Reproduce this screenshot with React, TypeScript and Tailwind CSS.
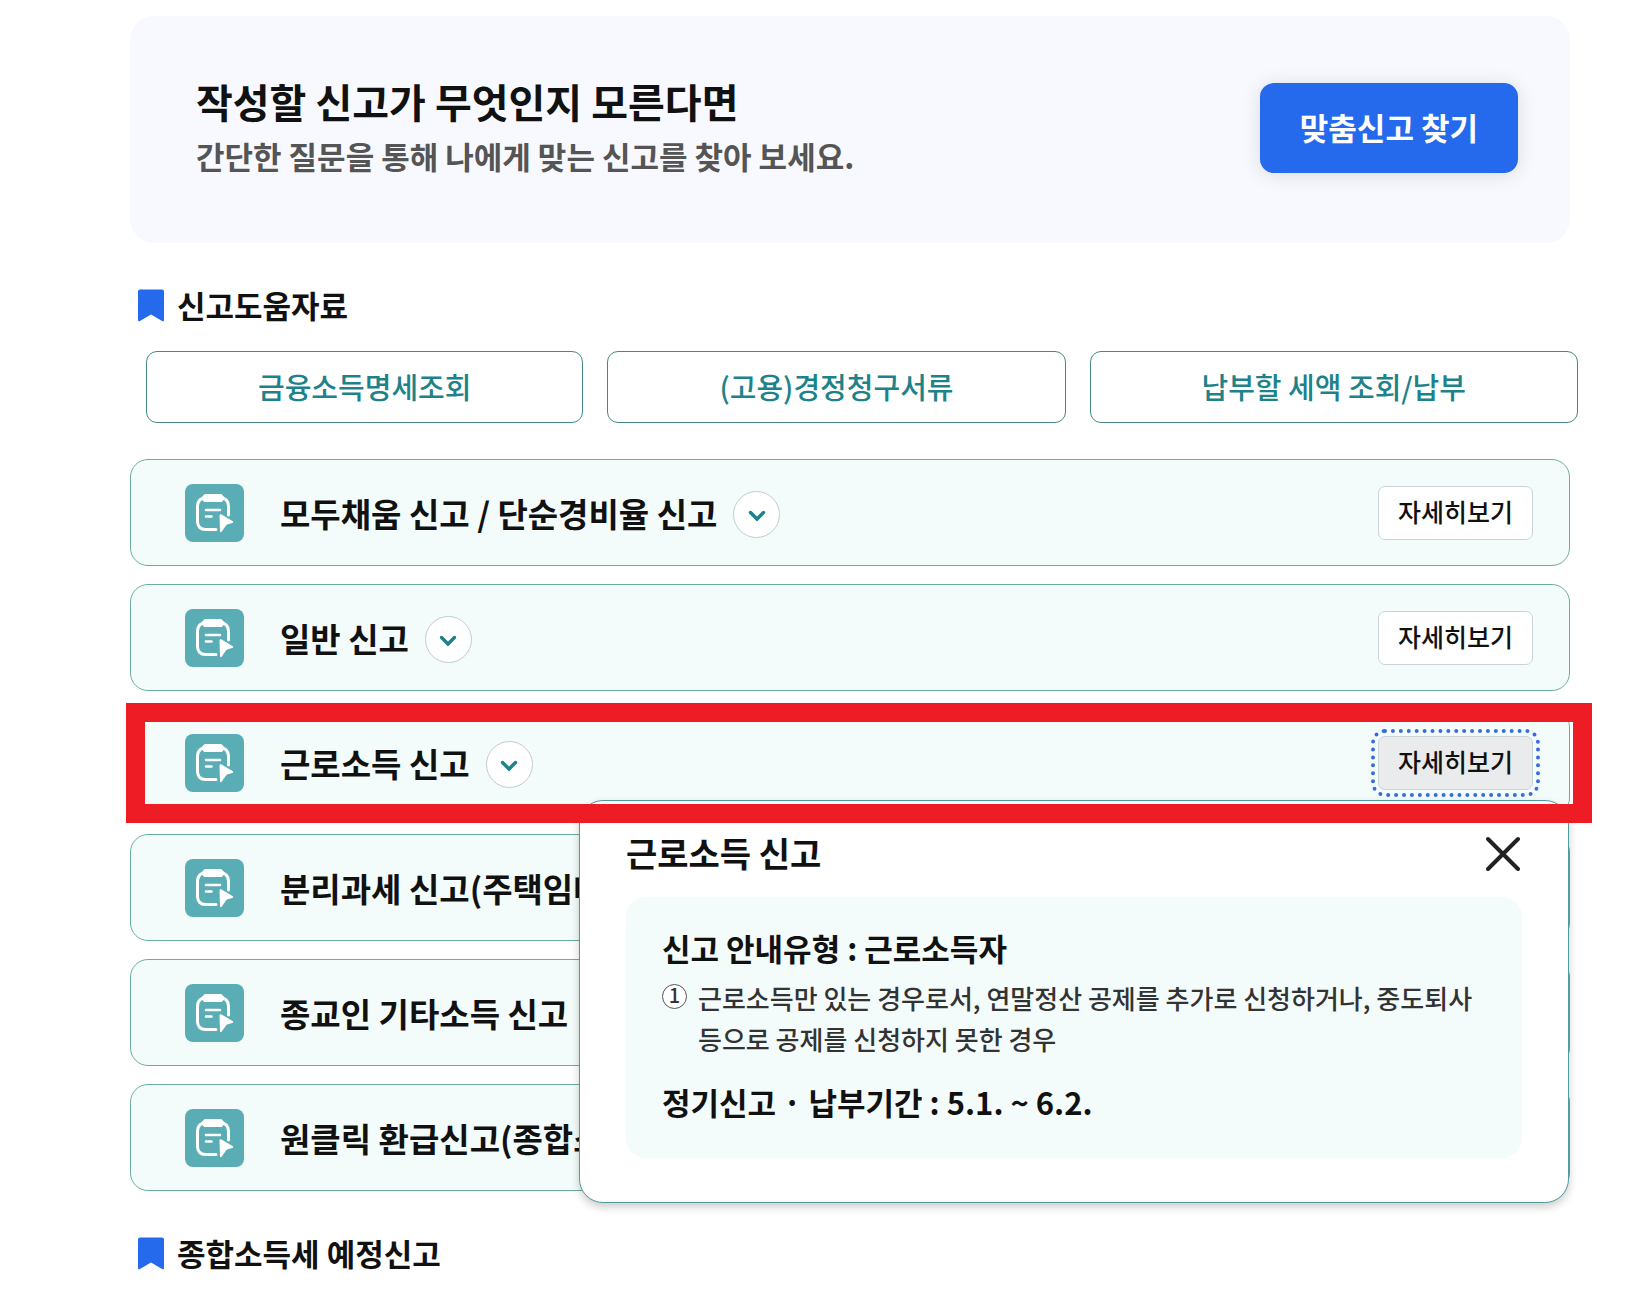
import React, { useState } from "react";

interface ReportType {
  id: string;
  title: string;
}

const helpLinks = [
  "금융소득명세조회",
  "(고용)경정청구서류",
  "납부할 세액 조회/납부",
];

const reportTypes: ReportType[] = [
  { id: "simple", title: "모두채움 신고 / 단순경비율 신고" },
  { id: "general", title: "일반 신고" },
  { id: "wage", title: "근로소득 신고" },
  { id: "separate", title: "분리과세 신고(주택임대)" },
  { id: "religion", title: "종교인 기타소득 신고" },
  { id: "oneclick", title: "원클릭 환급신고(종합소득세)" },
];

const ReportIcon: React.FC = () => (
  <svg viewBox="0 0 59 58" className="h-[58px] w-[59px] shrink-0" aria-hidden="true">
    <rect width="59" height="58" rx="8" fill="#5aadb5" />
    <path
      d="M43.5 31V22c0-5-3.5-8.5-8.5-8.5H21c-5 0-8.5 3.5-8.5 8.5v15.5c0 5 3 8 8 8H31"
      fill="none"
      stroke="#fff"
      strokeWidth="3"
      strokeLinecap="round"
    />
    <path
      d="M21 10h14c1.2 0 2 .4 2.6 1.200l1.4 1.800c.6.7.6 1.500.1 2.200l-1.300 1.700c-.6.8-1.500 1.200-2.600 1.200H20.800c-1.100 0-2-.4-2.600-1.200l-1.300-1.700c-.5-.7-.5-1.500.1-2.200l1.400-1.800c.6-.8 1.400-1.200 2.600-1.200z"
      fill="#fff"
    />
    <path
      d="M21 26h14M21 32.5h5.5"
      fill="none"
      stroke="#fff"
      strokeWidth="2.6"
      strokeLinecap="round"
    />
    <path
      d="M34.5 31.6c0-1.300.9-1.800 2-1.200l11 6.500c1 .7 1 1.600-.2 2l-4.600 1.300c-.7.2-1.100.5-1.500 1.100l-4.400 6.200c-.8 1.100-1.800.8-1.800-.5z"
      fill="#fff"
      stroke="#5aadb5"
      strokeWidth="2.4"
      paintOrder="stroke"
    />
  </svg>
);

const SectionTitle: React.FC<{ children: React.ReactNode }> = ({ children }) => (
  <h2 className="flex items-center gap-3 pl-[7px] text-[31px] leading-10 font-bold">
    <svg viewBox="0 0 28 33" className="h-[33px] w-7 shrink-0" aria-hidden="true">
      <path
        d="M3 .5h22a2 2 0 0 1 2 2V31c0 1.200-1 1.600-1.900 1.100L14 25.500l-11.100 6.600C2 32.600 1 32.200 1 31V2.500a2 2 0 0 1 2-2z"
        fill="#256aec"
      />
    </svg>
    {children}
  </h2>
);

const DetailPopup: React.FC<{ title: string; onClose: () => void }> = ({
  title,
  onClose,
}) => (
  <div
    role="dialog"
    aria-label={title}
    className="absolute top-[90px] right-0 left-[448px] z-10 rounded-3xl border border-[#4f9a9c] bg-white px-[46px] pt-[30px] pb-11 shadow-[0_4px_8px_rgba(0,0,0,0.2)]"
  >
    <div className="flex items-center justify-between">
      <h3 className="text-[34px] leading-[44px] font-bold">{title}</h3>
      <button type="button" onClick={onClose} aria-label="닫기">
        <svg viewBox="0 0 36 36" className="h-9 w-9" aria-hidden="true">
          <path
            d="M2 4l30 30M32 4L2 34"
            stroke="#222"
            strokeWidth="4"
            strokeLinecap="round"
          />
        </svg>
      </button>
    </div>

    <div className="mt-[22px] rounded-[20px] bg-[#f3fcfb] px-9 pt-7 pb-[33px]">
      <p className="text-[31px] leading-[46px] font-bold">
        신고 안내유형 : 근로소득자
      </p>
      <div className="mt-[6px] flex gap-[11px] text-[26px] leading-[41px] font-medium text-[#333]">
        <span className="mt-[7px] flex h-[25px] w-[25px] shrink-0 items-center justify-center rounded-full border border-[#555] bg-white pb-[3px] text-xl leading-none">
          1
        </span>
        <p>
          근로소득만 있는 경우로서, 연말정산 공제를 추가로 신청하거나, 중도퇴사
          등으로 공제를 신청하지 못한 경우
        </p>
      </div>
      <p className="mt-5 text-[31px] leading-[46px] font-bold">
        정기신고 · 납부기간 : 5.1. ~ 6.2.
      </p>
    </div>
  </div>
);

interface ReportCardProps {
  report: ReportType;
  isOpen: boolean;
  isCovered: boolean;
  onToggle: () => void;
  onClose: () => void;
}

const ReportCard: React.FC<ReportCardProps> = ({
  report,
  isOpen,
  isCovered,
  onToggle,
  onClose,
}) => (
  <li className="relative flex min-h-[107px] items-center rounded-[18px] border border-[#6bae9f] bg-[#f3fcfb] pr-9 pl-[54px]">
    <ReportIcon />
    <h3 className="pl-9 text-[33px] leading-[44px] font-bold">
      {report.title}
    </h3>
    {/* 팝업에 가려진 카드의 버튼은 숨긴다 */}
    {!isCovered && (
      <>
        <button
          type="button"
          aria-label={`${report.title} 펼치기`}
          className="mt-1 ml-4 flex h-[47px] w-[47px] shrink-0 items-center justify-center rounded-full border border-[#c3cccc] bg-white"
        >
          <svg viewBox="0 0 20 14" className="mt-[2px] h-[14px] w-5" aria-hidden="true">
            <path
              d="M3.5 3.5L10 10l6.500-6.500"
              fill="none"
              stroke="#1d8289"
              strokeWidth="3.400"
              strokeLinecap="round"
            />
          </svg>
        </button>
        <button
          type="button"
          onClick={onToggle}
          className={`ml-auto h-[54px] shrink-0 rounded-[7px] border border-[#ccd3d6] px-[19px] pb-1 text-[25px] leading-8 font-medium ${
            isOpen
              ? "bg-[#e9ebec] outline-4 outline-offset-[3px] outline-[#3a6bdc] outline-dotted"
              : "bg-white"
          }`}
        >
          자세히보기
        </button>
      </>
    )}

    {isOpen && (
      <>
        <DetailPopup title={report.title} onClose={onClose} />
        {/* 선택한 신고 강조 테두리 */}
        <div className="pointer-events-none absolute -top-[7px] -right-[23px] -bottom-2 -left-[5px] z-20 border-[19px] border-[#ee1c25]" />
      </>
    )}
  </li>
);

export default function App() {
  const [openId, setOpenId] = useState<string | null>("wage");
  const openIndex = reportTypes.findIndex((report) => report.id === openId);

  return (
    <main className="bg-white pt-4 pr-20 pl-[130px] font-['Noto_Sans_CJK_KR',sans-serif] text-[#111]">
      {/* 맞춤신고 안내 */}
      <section className="flex min-h-[227px] items-center justify-between rounded-3xl bg-[#f8f9fe] pr-[52px] pb-1 pl-[66px]">
        <div>
          <h1 className="text-[40px] leading-[56px] font-bold">
            작성할 신고가 무엇인지 모른다면
          </h1>
          <p className="text-[31px] leading-[54px] font-bold text-[#555]">
            간단한 질문을 통해 나에게 맞는 신고를 찾아 보세요.
          </p>
        </div>
        <button
          type="button"
          className="h-[90px] shrink-0 rounded-[14px] bg-[#256aec] px-10 text-[31px] font-bold text-white shadow-[0_2px_20px_rgba(0,0,0,0.12)]"
        >
          맞춤신고 찾기
        </button>
      </section>

      {/* 신고도움자료 */}
      <section className="mt-[42px]">
        <SectionTitle>신고도움자료</SectionTitle>
        <div className="mt-[26px] -mr-2 ml-4 flex gap-6">
          {helpLinks.map((label) => (
            <button
              key={label}
              type="button"
              className="h-[72px] flex-auto rounded-[11px] border border-[#458a80] bg-white text-[29px] font-medium text-[#1d8289]"
            >
              {label}
            </button>
          ))}
        </div>
      </section>

      <ul className="mt-9 flex flex-col gap-[18px]">
        {reportTypes.map((report, index) => (
          <ReportCard
            key={report.id}
            report={report}
            isOpen={openId === report.id}
            isCovered={
              openIndex >= 0 && index > openIndex && index <= openIndex + 3
            }
            onToggle={() => setOpenId(openId === report.id ? null : report.id)}
            onClose={() => setOpenId(null)}
          />
        ))}
      </ul>

      <section className="mt-[42px]">
        <SectionTitle>종합소득세 예정신고</SectionTitle>
      </section>
    </main>
  );
}
